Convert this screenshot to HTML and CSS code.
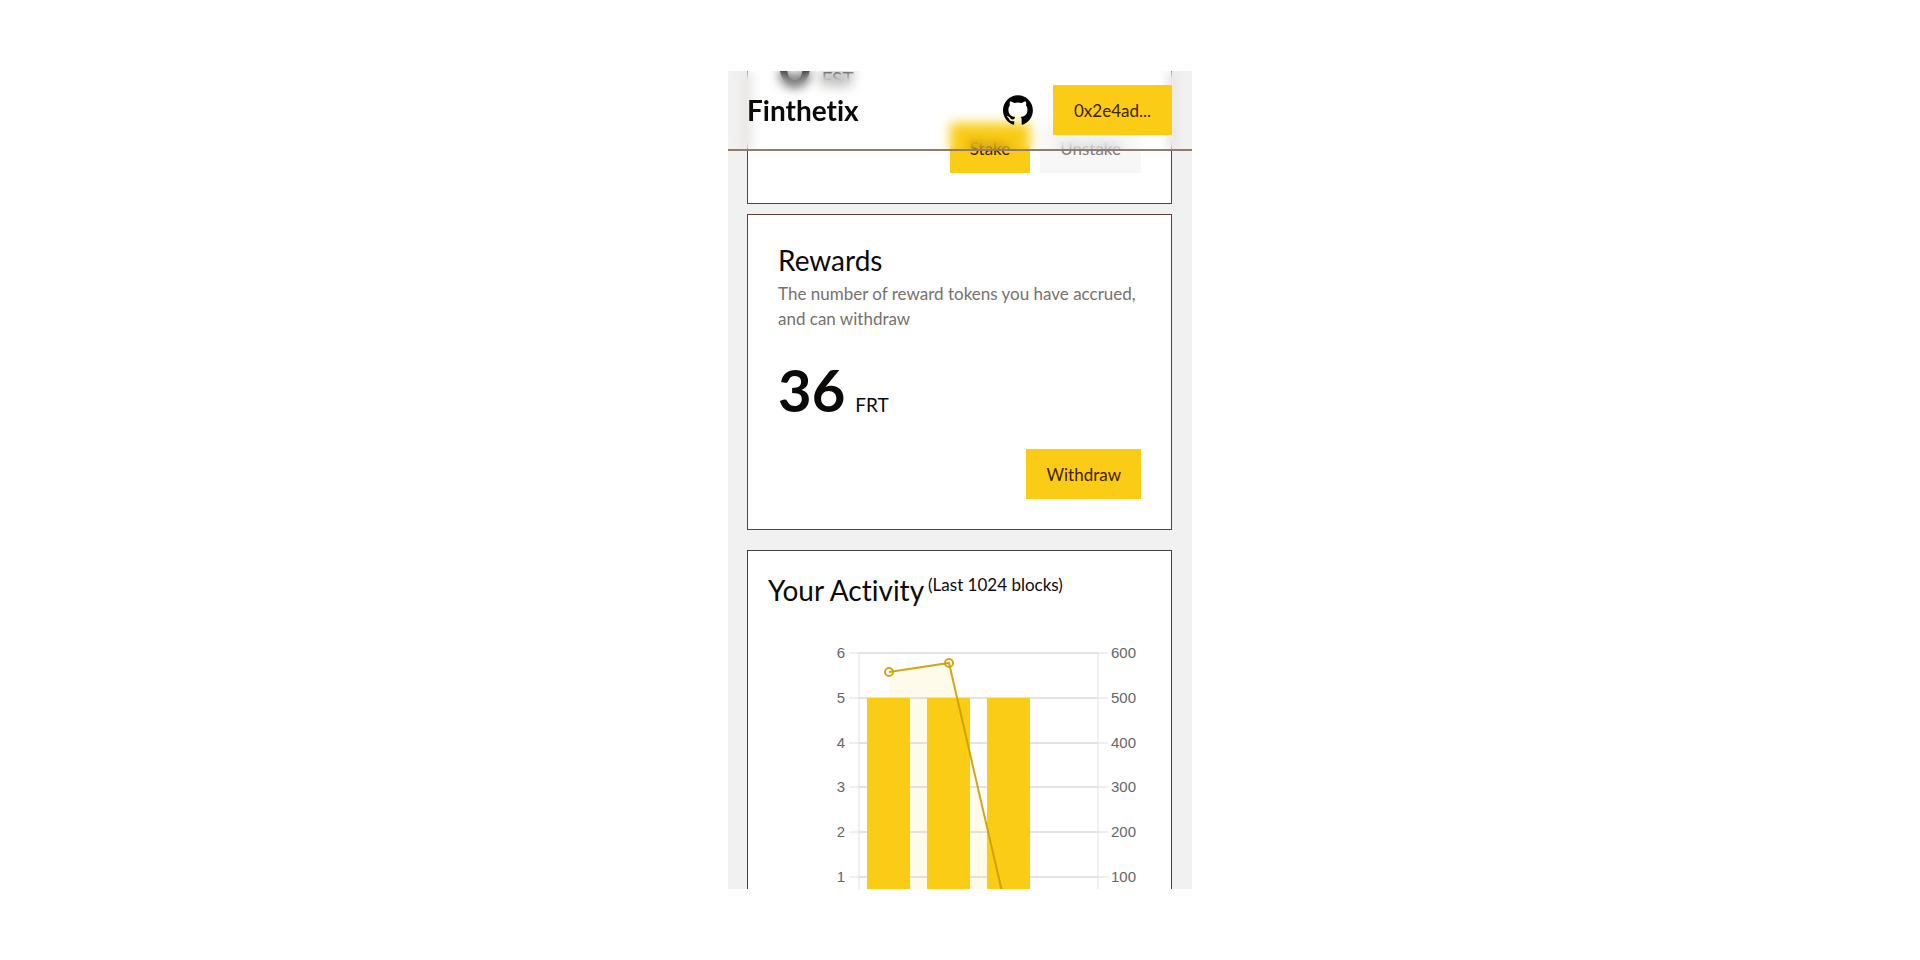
FILE: index.html
```html
<!DOCTYPE html>
<html lang="en">
<head>
<meta charset="utf-8">
<meta name="viewport" content="width=device-width, initial-scale=1">
<title>Finthetix</title>
<link rel="stylesheet" href="styles.css">
</head>
<body>
<div class="frame">
  <header class="topbar">
    <h1 class="brand">Finthetix</h1>
    <a class="github" href="#" aria-label="GitHub">
      <svg viewBox="0 0 98 96" width="30" height="30"><path fill-rule="evenodd" clip-rule="evenodd" d="M48.854 0C21.839 0 0 22 0 49.217c0 21.756 13.993 40.172 33.405 46.69 2.427.49 3.316-1.059 3.316-2.362 0-1.141-.08-5.052-.08-9.127-13.59 2.934-16.42-5.867-16.42-5.867-2.184-5.704-5.42-7.17-5.42-7.17-4.448-3.015.324-3.015.324-3.015 4.934.326 7.523 5.052 7.523 5.052 4.367 7.496 11.404 5.378 14.235 4.074.404-3.178 1.699-5.378 3.074-6.6-10.839-1.141-22.243-5.378-22.243-24.283 0-5.378 1.94-9.778 5.014-13.2-.485-1.222-2.184-6.275.486-13.038 0 0 4.125-1.304 13.426 5.052a46.97 46.97 0 0 1 12.214-1.63c4.125 0 8.33.571 12.213 1.63 9.302-6.356 13.427-5.052 13.427-5.052 2.67 6.763.97 11.816.485 13.038 3.155 3.422 5.015 7.822 5.015 13.2 0 18.905-11.404 23.06-22.324 24.283 1.78 1.548 3.316 4.481 3.316 9.126 0 6.6-.08 11.897-.08 13.526 0 1.304.89 2.853 3.316 2.364 19.412-6.52 33.405-24.935 33.405-46.691C97.707 22 75.788 0 48.854 0z"/></svg>
    </a>
    <button class="btn account" type="button">0x2e4ad...</button>
  </header>
  <main class="content">
    <section class="card card-stake">
      <p class="amount"><strong class="value">0</strong><span class="unit">FST</span></p>
      <div class="actions">
        <button class="btn" type="button">Stake</button>
        <button class="btn" type="button" disabled>Unstake</button>
      </div>
    </section>
    <section class="card">
      <h2 class="title">Rewards</h2>
      <p class="desc">The number of reward tokens you have accrued, and can withdraw</p>
      <p class="amount"><strong class="value">36</strong><span class="unit">FRT</span></p>
      <div class="actions">
        <button class="btn" type="button">Withdraw</button>
      </div>
    </section>
    <section class="card card-activity">
      <h2 class="title">Your Activity<sup class="note">(Last 1024 blocks)</sup></h2>
      <svg class="chart" viewBox="0 0 383 300" role="img" aria-label="Activity over the last 1024 blocks">
        <path class="fill" d="M121 36L181 27L256 351H121Z"/>
        <g class="grid">
          <path d="M91 17H330M91 62H330M91 107H330M91 151H330M91 196H330M91 241H330"/>
        </g>
        <path class="axis" d="M81 17H91M81 62H91M81 107H91M81 151H91M81 196H91M81 241H91M330 17H340M330 62H340M330 107H340M330 151H340M330 196H340M330 241H340M91 17V300M330 17V300"/>
        <g class="bars"><path d="M99 62H142V300H99ZM159 62H202V300H159ZM219 62H262V300H219Z"/></g>
        <g class="line">
          <path d="M121 36L181 27L241 286"/>
          <circle cx="121" cy="36" r="4"/><circle cx="181" cy="27" r="4"/>
        </g>
        <g class="ticks-left">
          <text x="77" y="22">6</text><text x="77" y="67">5</text><text x="77" y="112">4</text><text x="77" y="156">3</text><text x="77" y="201">2</text><text x="77" y="246">1</text>
        </g>
        <g class="ticks-right">
          <text x="343" y="22">600</text><text x="343" y="67">500</text><text x="343" y="112">400</text><text x="343" y="156">300</text><text x="343" y="201">200</text><text x="343" y="246">100</text>
        </g>
      </svg>
    </section>
  </main>
</div>
</body>
</html>
```
FILE: styles.css
```css
* { box-sizing: border-box; }
body {
  margin: 0;
  height: 100vh;
  padding: 71px 16px;
  display: flex;
  justify-content: center;
  background: #fff;
  color: #0c0a09;
  font-family: Lato, "Open Sans", sans-serif;
  font-variant-ligatures: none;
}
h1, h2, p { margin: 0; }
.frame {
  position: relative;
  width: 100%;
  max-width: 464px;
  overflow: hidden;
  background: #f1f1f1;
}
.topbar {
  position: absolute;
  inset: 0 0 auto;
  z-index: 1;
  display: flex;
  align-items: center;
  gap: 20px;
  padding: 14px 20px 14px 19px;
  border-bottom: 2px solid #8f7c6f;
  backdrop-filter: blur(6px);
}
.brand {
  margin-right: auto;
  font-size: 28px;
  line-height: 36px;
  font-weight: 700;
}
.github { display: flex; color: #000; }
.btn {
  height: 50px;
  padding: 0 20px;
  border: 0;
  background: #facc15;
  color: #422006;
  font-family: inherit;
  font-size: 17px;
  line-height: 25px;
}
.btn:disabled { background: #f7f7f7; color: #7c7c7c; }
.account { min-width: 119px; }
.content {
  display: flex;
  flex-direction: column;
  gap: 10px;
  padding: 0 20px 0 19px;
}
.card {
  padding: 24px 30px 30px;
  border: 1px solid #5c4030;
  background: #fff;
}
.card-stake {
  margin-top: -66px;
  padding-top: 0;
  border-top: 0;
}
.card-activity {
  margin-top: 10px;
  padding: 18px 20px;
  border-color: #44403c;
}
.title {
  font-size: 28px;
  line-height: 42px;
  font-weight: 400;
}
.note {
  margin-left: 4px;
  font-size: 17px;
  line-height: 1;
}
.desc {
  color: #78716c;
  font-size: 17px;
  line-height: 25px;
}
.amount {
  display: flex;
  align-items: baseline;
  gap: 10px;
  margin-top: 29px;
  line-height: 60px;
}
.value { font-size: 58px; }
.unit { font-size: 19px; }
.actions {
  display: flex;
  justify-content: flex-end;
  gap: 10px;
  margin-top: 14px;
}
.chart {
  display: block;
  width: 100%;
  margin-top: 25px;
}
.fill { fill: #fffbeb; }
.grid { stroke: #c8c8c8; }
.axis { fill: none; stroke: #e0e0e0; }
.bars { fill: #facc15; }
.line { fill: none; stroke: #ca9f04; stroke-opacity: 0.9; stroke-width: 2; }
.ticks-left, .ticks-right {
  fill: #666;
  font: 15px "Liberation Sans", Arial, sans-serif;
}
.ticks-left { text-anchor: end; }
```
